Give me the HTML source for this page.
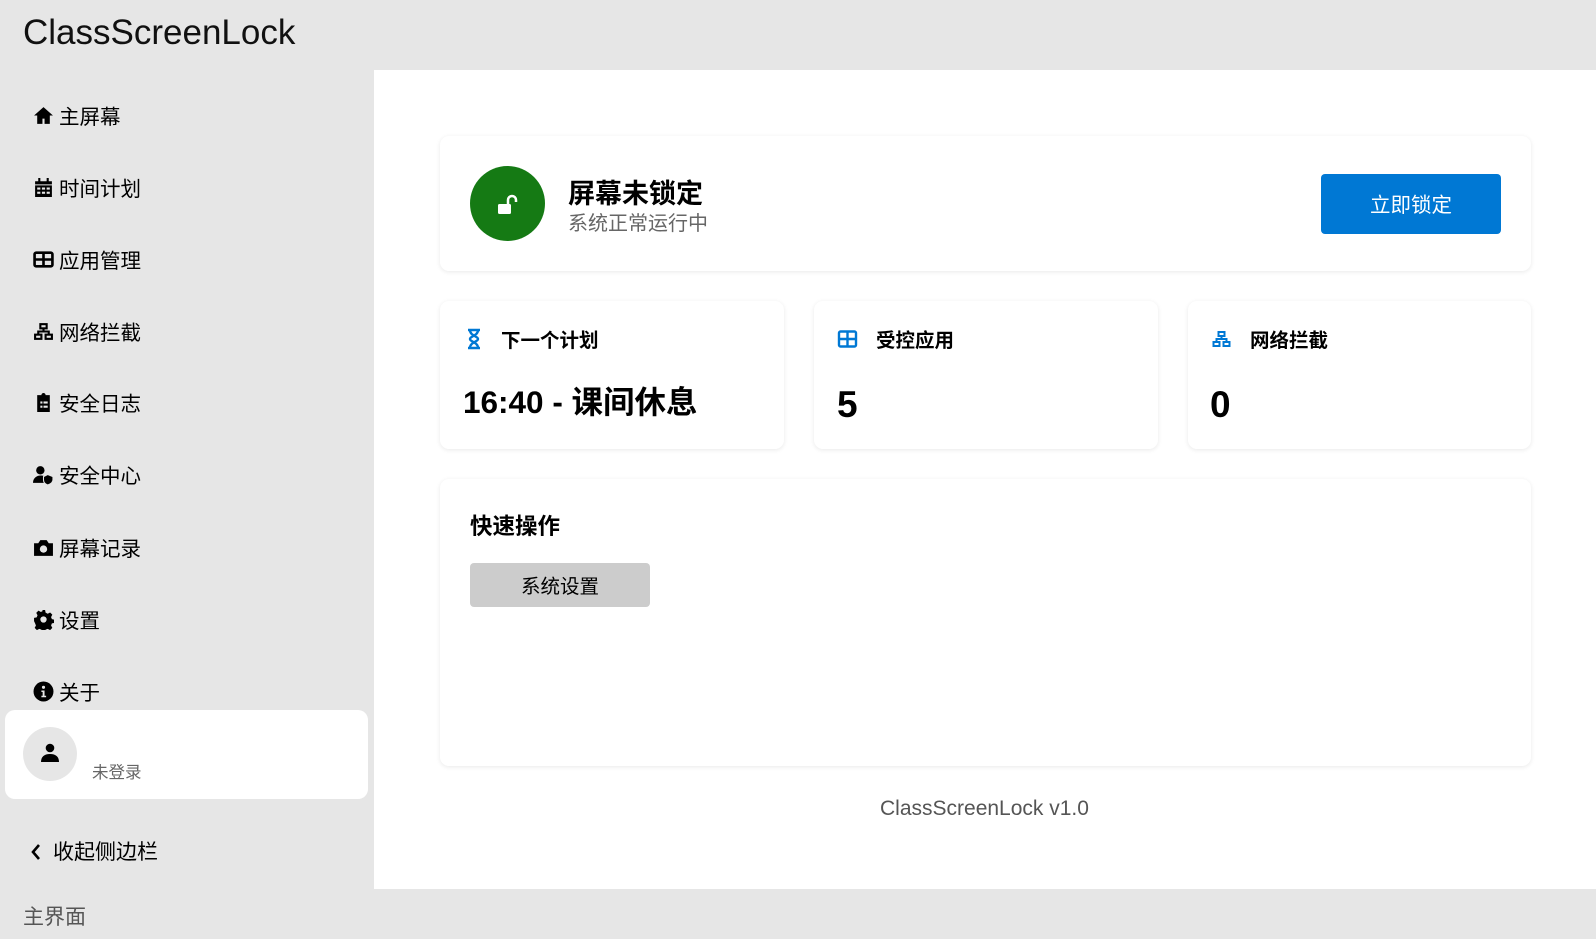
<!DOCTYPE html>
<html><head><meta charset="utf-8"><style>
*{margin:0;padding:0;box-sizing:border-box}
body{width:1596px;height:939px;background:#e6e6e6;font-family:"Liberation Sans","Noto Sans CJK SC",sans-serif;position:relative;overflow:hidden;color:#000}
.abs{position:absolute}
.title{left:23px;top:13px;font-size:35px;color:#111}
.main{left:374px;top:70px;width:1222px;height:819px;background:#fff}
.nav{left:33px;font-size:20.5px;display:flex;align-items:center;gap:5px;height:30px}
.nav svg{width:21px;height:21px}
.card{background:#fff;border-radius:9px;box-shadow:0 1px 5px rgba(0,0,0,.09)}
.lbl{font-size:19.5px;font-weight:bold;display:flex;align-items:center;gap:18px}
</style></head><body>
<div class="abs title">ClassScreenLock</div>
<div class="abs main"></div>

<div class="abs nav" style="top:100px"><svg viewBox="0 0 20 20"><path d="M10 2L1 10h3v8h5v-5h2v5h5v-8h3z"/></svg>主屏幕</div>
<div class="abs nav" style="top:172px"><svg viewBox="0 0 20 20"><path d="M5 1h2v3H5zM13 1h2v3h-2zM2 4h16v3H2zM2 8h16v11H2z"/><g fill="#e6e6e6"><rect x="4" y="10" width="3" height="2"/><rect x="8.5" y="10" width="3" height="2"/><rect x="13" y="10" width="3" height="2"/><rect x="4" y="14" width="3" height="2"/><rect x="8.5" y="14" width="3" height="2"/><rect x="13" y="14" width="3" height="2"/></g></svg>时间计划</div>
<div class="abs nav" style="top:244px"><svg viewBox="0 0 20 20"><rect x="1.5" y="3.5" width="17" height="13" rx="1.5" fill="none" stroke="#000" stroke-width="2.5"/><path d="M10 3v14M2 10h16" stroke="#000" stroke-width="2.5"/></svg>应用管理</div>
<div class="abs nav" style="top:316px"><svg viewBox="0 0 20 20" fill="none" stroke="#000" stroke-width="2"><rect x="7" y="3" width="6" height="4"/><rect x="2" y="13" width="6" height="4"/><rect x="12" y="13" width="6" height="4"/><path d="M10 7v3M5 13v-3h10v3"/></svg>网络拦截</div>
<div class="abs nav" style="top:387px"><svg viewBox="0 0 20 20"><path d="M4 3h4a2 2 0 014 0h4v16H4z"/><g fill="#e6e6e6"><rect x="7" y="9" width="2" height="2"/><rect x="10" y="9" width="4" height="2"/><rect x="7" y="13" width="2" height="2"/><rect x="10" y="13" width="4" height="2"/></g></svg>安全日志</div>
<div class="abs nav" style="top:459px"><svg viewBox="0 0 20 20"><circle cx="7" cy="6" r="4"/><path d="M0 18c0-5 4-7 7-7s5 1 6 2v5z"/><path d="M14 10l5 2v3c0 2-2 4-5 5-3-1-4-3-4-5v-3z" stroke="#e6e6e6" stroke-width="1"/></svg>安全中心</div>
<div class="abs nav" style="top:532px"><svg viewBox="0 0 20 20"><path d="M1 6h4l2-3h6l2 3h4v12H1z"/><circle cx="10" cy="11.5" r="3.5" fill="#e6e6e6"/></svg>屏幕记录</div>
<div class="abs nav" style="top:604px"><svg viewBox="0 0 20 20"><path d="M8.5 1h3l.5 2.5 2 1 2.3-1.2 2.1 2.1-1.2 2.3.8 2 2.5.5v3l-2.5.5-.8 2 1.2 2.3-2.1 2.1-2.3-1.2-2 .8-.5 2.5h-3l-.5-2.5-2-.8-2.3 1.2-2.1-2.1 1.2-2.3-.8-2L1 11.5v-3l2.5-.5.8-2L3.1 3.7l2.1-2.1 2.3 1.2 2-1z"/><circle cx="10" cy="10" r="3" fill="#e6e6e6"/></svg>设置</div>
<div class="abs nav" style="top:676px"><svg viewBox="0 0 20 20"><circle cx="10" cy="10" r="9.5"/><circle cx="10" cy="6" r="1.5" fill="#e6e6e6"/><path d="M8 9h3v5h1.5v1.5h-4.5V14h1.2v-3.5H8z" fill="#e6e6e6"/></svg>关于</div>

<div class="abs" style="left:5px;top:710px;width:363px;height:89px;background:#fff;border-radius:10px"></div>
<div class="abs" style="left:23px;top:727px;width:54px;height:54px;border-radius:50%;background:#e6e6e6"></div>
<svg class="abs" style="left:40px;top:743px" width="20" height="20" viewBox="0 0 20 20"><circle cx="10" cy="5" r="4.3"/><path d="M1 19c0-5 3-8 9-8s9 3 9 8z"/></svg>
<div class="abs" style="left:92px;top:759px;font-size:16.5px;color:#666">未登录</div>

<svg class="abs" style="left:29px;top:842px" width="14" height="20" viewBox="0 0 14 20"><path d="M10 3L4 10l6 7" fill="none" stroke="#000" stroke-width="2.6"/></svg>
<div class="abs" style="left:53px;top:836px;font-size:21px">收起侧边栏</div>
<div class="abs" style="left:23px;top:901px;font-size:21px;color:#555">主界面</div>

<div class="abs card" style="left:440px;top:136px;width:1091px;height:135px"></div>
<div class="abs" style="left:470px;top:166px;width:75px;height:75px;border-radius:50%;background:#157a14"></div>
<svg class="abs" style="left:496px;top:194px" width="24" height="22" viewBox="0 0 24 22"><rect x="2" y="10" width="13" height="10" rx="1.5" fill="#fff"/><path d="M12 10V6a4 4 0 018 0v2" fill="none" stroke="#fff" stroke-width="2.5"/></svg>
<div class="abs" style="left:568px;top:172px;font-size:27px;font-weight:bold">屏幕未锁定</div>
<div class="abs" style="left:568px;top:207px;font-size:20px;color:#666">系统正常运行中</div>
<div class="abs" style="left:1321px;top:174px;width:180px;height:60px;background:#0078d4;border-radius:4px;color:#fff;font-size:20.5px;display:flex;align-items:center;justify-content:center;padding-bottom:2px">立即锁定</div>

<div class="abs card" style="left:440px;top:301px;width:344px;height:148px"></div>
<div class="abs card" style="left:814px;top:301px;width:344px;height:148px"></div>
<div class="abs card" style="left:1188px;top:301px;width:343px;height:148px"></div>

<div class="abs lbl" style="left:465px;top:324px"><svg width="18" height="22" viewBox="0 0 18 22" fill="none" stroke="#0078d4" stroke-width="2.4"><path d="M3 2h12M3 20h12M5 2c0 6 8 6 8 9s-8 3-8 9M13 2c0 6-8 6-8 9s8 3 8 9"/></svg>下一个计划</div>
<div class="abs" style="left:463px;top:377px;font-size:31.5px;font-weight:bold">16:40 - 课间休息</div>

<div class="abs lbl" style="left:837px;top:324px"><svg width="21" height="20" viewBox="0 0 20 20"><rect x="1.5" y="2.5" width="17" height="15" rx="1.5" fill="none" stroke="#0078d4" stroke-width="2.4"/><path d="M10 2v16M2 10h16" stroke="#0078d4" stroke-width="2.4"/></svg>受控应用</div>
<div class="abs" style="left:837px;top:384px;font-size:37px;font-weight:bold">5</div>

<div class="abs lbl" style="left:1211px;top:324px"><svg width="21" height="20" viewBox="0 0 20 20" fill="none" stroke="#0078d4" stroke-width="2"><rect x="7" y="3" width="6" height="4"/><rect x="2" y="13" width="6" height="4"/><rect x="12" y="13" width="6" height="4"/><path d="M10 7v3M5 13v-3h10v3"/></svg>网络拦截</div>
<div class="abs" style="left:1210px;top:384px;font-size:37px;font-weight:bold">0</div>

<div class="abs card" style="left:440px;top:479px;width:1091px;height:287px"></div>
<div class="abs" style="left:470px;top:509px;font-size:22.5px;font-weight:bold">快速操作</div>
<div class="abs" style="left:470px;top:563px;width:180px;height:44px;background:#cccccc;border-radius:4px;font-size:19.5px;display:flex;align-items:center;justify-content:center;padding-bottom:2px">系统设置</div>

<div class="abs" style="left:880px;top:797px;font-size:21px;color:#555">ClassScreenLock v1.0</div>
</body></html>
